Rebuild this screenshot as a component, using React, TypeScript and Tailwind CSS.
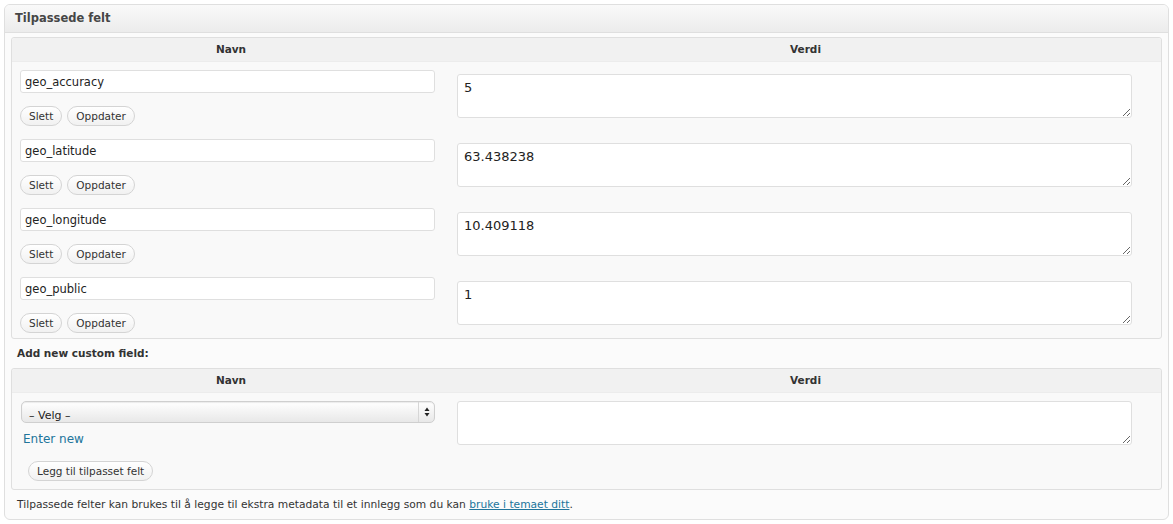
const fields = [
  { key: "geo_accuracy", value: "5" },
  { key: "geo_latitude", value: "63.438238" },
  { key: "geo_longitude", value: "10.409118" },
  { key: "geo_public", value: "1" },
];

const font = "font-['DejaVu_Sans','Verdana',sans-serif]";

function SmallButton({ children }: { children: React.ReactNode }) {
  return (
    <button
      type="button"
      className="h-[20px] px-[8px] rounded-full border border-[#d4d4d4] bg-gradient-to-b from-white to-[#f1f1f1] text-[10.5px] text-[#333] leading-none"
    >
      {children}
    </button>
  );
}

function TableHead() {
  return (
    <div className="grid grid-cols-[438px_1fr] h-[24px] bg-[#f1f1f1] border-b border-[#ececec] text-[10.5px] font-bold text-[#333] items-center rounded-t-[3px]">
      <div className="text-center">Navn</div>
      <div className="text-center">Verdi</div>
    </div>
  );
}

function MetaRow({ name, value }: { name: string; value: string }) {
  return (
    <div className="grid grid-cols-[438px_1fr]">
      <div className="pl-[8px] pr-[15px] pt-[8px] pb-[5px]">
        <input
          defaultValue={name}
          className="block w-full h-[23px] px-[4px] bg-white border border-[#dfdfdf] rounded-[3px] text-[11.5px] text-[#222] outline-none"
        />
        <div className="flex gap-[5px] mt-[13px]">
          <SmallButton>Slett</SmallButton>
          <SmallButton>Oppdater</SmallButton>
        </div>
      </div>
      <div className="pl-[7px] pr-[29px] pt-[12px]">
        <textarea
          defaultValue={value}
          className="block w-full h-[44px] px-[6px] py-[3px] bg-white border border-[#dfdfdf] rounded-[3px] text-[13px] text-[#222] outline-none"
        />
      </div>
    </div>
  );
}

export default function App() {
  return (
    <div className={`min-h-screen bg-white p-[4px] ${font}`}>
      <div className="border border-[#dfdfdf] rounded-[6px] bg-[#fbfbfb] overflow-hidden">
        <div className="h-[28px] flex items-center px-[10px] bg-gradient-to-b from-[#f9f9f9] to-[#ececec] border-b border-[#dfdfdf]">
          <h3 className="text-[11.5px] font-bold text-[#464646]">Tilpassede felt</h3>
        </div>

        <div className="px-[6px] pt-[4px] pb-[6px]">
          <div className="border border-[#dfdfdf] rounded-[3px] bg-[#f9f9f9]">
            <TableHead />
            {fields.map((f) => (
              <MetaRow key={f.key} name={f.key} value={f.value} />
            ))}
          </div>

          <p className="mt-[6px] ml-[6px] h-[16px] leading-[16px] text-[10.5px] font-bold text-[#333]">
            Add new custom field:
          </p>

          <div className="mt-[7px] border border-[#dfdfdf] rounded-[3px] bg-[#f9f9f9]">
            <TableHead />
            <div className="grid grid-cols-[438px_1fr]">
              <div className="pl-[9px] pr-[15px] pt-[8px] pb-[8px]">
                <div className="relative h-[22px] rounded-[5px] border border-[#cfcfcf] bg-gradient-to-b from-white to-[#e8e8e8] shadow-[inset_0_1px_1px_rgba(0,0,0,0.08)]">
                  <select className="appearance-none w-full h-full bg-transparent pl-[7px] text-[11px] text-[#222] outline-none">
                    <option>– Velg –</option>
                  </select>
                  <div className="absolute right-0 top-0 bottom-0 w-[16px] border-l border-[#d6d6d6] flex items-center justify-center pointer-events-none">
                    <svg width="6" height="10" viewBox="0 0 6 10">
                      <path d="M3 0.5 L5.5 4 H0.5 Z" fill="#222" />
                      <path d="M3 9.5 L5.5 6 H0.5 Z" fill="#222" />
                    </svg>
                  </div>
                </div>
                <a href="#" className="block mt-[7px] ml-[2px] h-[18px] leading-[18px] text-[12px] text-[#21759b]">
                  Enter new
                </a>
                <div className="mt-[13px] ml-[7px] flex">
                  <SmallButton>Legg til tilpasset felt</SmallButton>
                </div>
              </div>
              <div className="pl-[7px] pr-[29px] pt-[8px]">
                <textarea className="block w-full h-[44px] px-[6px] py-[3px] bg-white border border-[#dfdfdf] rounded-[3px] text-[13px] outline-none" />
              </div>
            </div>
          </div>

          <p className="mt-[7px] ml-[6px] h-[16px] leading-[16px] text-[10.7px] text-[#333]">
            Tilpassede felter kan brukes til å legge til ekstra metadata til et innlegg som du kan{" "}
            <a href="#" className="text-[#21759b] underline">
              bruke i temaet ditt
            </a>
            .
          </p>
        </div>
      </div>
    </div>
  );
}
